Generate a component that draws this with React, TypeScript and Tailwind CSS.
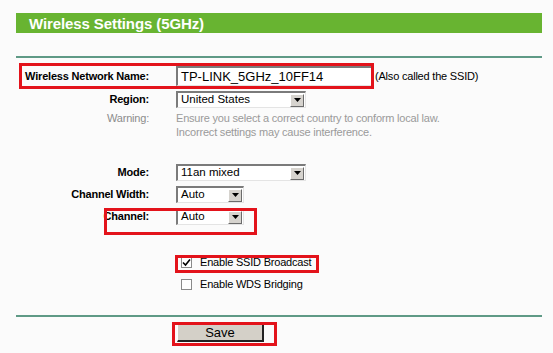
import React from 'react';

const font = { fontFamily: '"Liberation Sans", Arial, sans-serif' };

const Select = ({ value, w }: { value: string; w: string }) => (
  <div
    className={`${w} h-[17px] flex items-center bg-white border-t-2 border-l-2 border-t-[#7b7b7b] border-l-[#7b7b7b] border-b border-r border-b-[#e4e4e4] border-r-[#e4e4e4]`}
  >
    <span className="flex-1 pl-[3px] text-[11.5px] leading-none text-black">{value}</span>
    <div className="w-[14px] h-[13px] mr-[1px] bg-[#d6d3ce] border border-t-white border-l-white border-b-[#6b6b6b] border-r-[#6b6b6b] flex items-center justify-center">
      <svg width="7" height="4" viewBox="0 0 7 4">
        <polygon points="0,0 7,0 3.5,4" fill="#000" />
      </svg>
    </div>
  </div>
);

const Row = ({ label, children, className = '' }: any) => (
  <div className={`flex items-center ${className}`}>
    <div className="w-[150px] pr-[1px] text-right text-[11px] tracking-[-0.2px] font-bold text-black">
      {label}
    </div>
    <div className="ml-[26px]">{children}</div>
  </div>
);

export default function App() {
  return (
    <div style={font} className="relative w-[553px] h-[353px] bg-[#fbfbfb] overflow-hidden">
      <div className="ml-[16px] mt-[13px] w-[526px] h-[20px] bg-[#68b431] flex items-center pl-[13px]">
        <span className="text-white font-bold text-[15px] tracking-[-0.1px] leading-none">Wireless Settings (5GHz)</span>
      </div>
      <div className="ml-[16px] mt-[23px] w-[526px] h-[2px] bg-[#5f9a86]" />

      <Row label="Wireless Network Name:" className="mt-[8px] h-[20px]">
        <div className="flex items-center">
          <div className="w-[196px] h-[20px] bg-white border-t-2 border-l-2 border-t-[#7b7b7b] border-l-[#7b7b7b] border-b border-r border-b-[#e4e4e4] border-r-[#e4e4e4] flex items-center pl-[3px] text-[13px] text-black">
            TP-LINK_5GHz_10FF14
          </div>
          <span className="ml-[3px] text-[11px] tracking-[-0.2px] text-black">(Also called the SSID)</span>
        </div>
      </Row>

      <Row label="Region:" className="mt-[5px] h-[17px]">
        <Select value="United States" w="w-[130px]" />
      </Row>

      <div className="flex mt-[3px]">
        <div className="w-[150px] pr-[1px] text-right text-[11px] tracking-[-0.2px] text-[#8c8c8c] leading-[14px]">Warning:</div>
        <div className="ml-[26px] text-[11px] tracking-[-0.2px] text-[#9a9a9a] leading-[14px]">
          Ensure you select a correct country to conform local law.
          <br />
          Incorrect settings may cause interference.
        </div>
      </div>

      <Row label="Mode:" className="mt-[25px] h-[17px]">
        <Select value="11an mixed" w="w-[130px]" />
      </Row>
      <Row label="Channel Width:" className="mt-[5px] h-[17px]">
        <Select value="Auto" w="w-[68px]" />
      </Row>
      <Row label="Channel:" className="mt-[5px] h-[17px] items-start">
        <Select value="Auto" w="w-[68px]" />
      </Row>

      <div className="ml-[181px] mt-[29px] flex flex-col gap-[6px]">
        <label className="flex items-center gap-[8px] text-[11px] tracking-[-0.2px] leading-[16px] text-black">
          <span className="w-[11px] h-[11px] bg-white border border-[#8a8a8a] flex items-center justify-center">
            <svg width="9" height="9" viewBox="0 0 9 9">
              <path d="M1 4.5 L3.5 7 L8 1.5" stroke="#000" strokeWidth="1.6" fill="none" />
            </svg>
          </span>
          Enable SSID Broadcast
        </label>
        <label className="flex items-center gap-[8px] text-[11px] tracking-[-0.2px] leading-[16px] text-black">
          <span className="w-[11px] h-[11px] bg-white border border-[#8a8a8a]" />
          Enable WDS Bridging
        </label>
      </div>

      <div className="ml-[16px] mt-[23px] w-[526px] h-[2px] bg-[#5f9a86]" />

      <div className="ml-[177px] mt-[7px] w-[87px] h-[18px] bg-[#d4d0c8] border border-t-white border-l-white border-b-2 border-r-2 border-b-[#222] border-r-[#222] flex items-center justify-center text-[13px] text-black">
        Save
      </div>

      {/* red annotation boxes */}
      <div className="absolute left-[19px] top-[63px] w-[355px] h-[26px] border-[3px] border-[#e3131b]" />
      <div className="absolute left-[104px] top-[208px] w-[153px] h-[27px] border-[3px] border-[#e3131b]" />
      <div className="absolute left-[175px] top-[255px] w-[144px] h-[18px] border-[3px] border-[#e3131b]" />
      <div className="absolute left-[172px] top-[322px] w-[105px] h-[24px] border-[3px] border-[#e3131b]" />
    </div>
  );
}
